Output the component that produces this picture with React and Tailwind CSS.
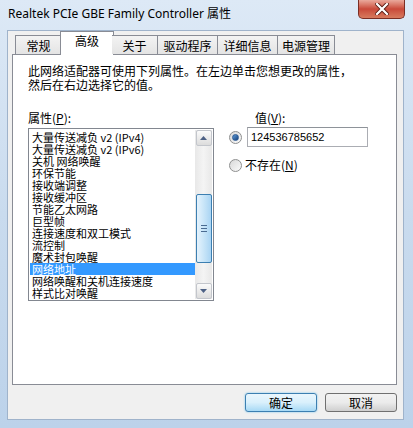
import React from 'react';

const cjk = { fontFamily: '"Noto Sans CJK SC", "Noto Sans", sans-serif' };

const tabs = ['常规', '高级', '关于', '驱动程序', '详细信息', '电源管理'];
const tabWidths = [47, 50, 46, 60, 60, 57];

const items = [
    '大量传送减负 v2 (IPv4)',
    '大量传送减负 v2 (IPv6)',
    '关机 网络唤醒',
    '环保节能',
    '接收端调整',
    '接收缓冲区',
    '节能乙太网路',
    '巨型帧',
    '连接速度和双工模式',
    '流控制',
    '魔术封包唤醒',
    '网络地址',
    '网络唤醒和关机连接速度',
    '样式比对唤醒',
];

const Radio = ({ checked }) => (
    <div className="w-[13px] h-[13px] rounded-full border border-[#8e8f8f] bg-gradient-to-br from-[#d8d8d8] to-[#fbfbfb] flex items-center justify-center shrink-0">
        {checked && (
            <div className="w-[7px] h-[7px] rounded-full bg-gradient-to-br from-[#5f9cd8] to-[#17407a] border border-[#2b5a95]" />
        )}
    </div>
);

const ScrollBtn = ({ up }) => (
    <div className="h-[16px] w-[16px] border border-[#c3c6cc] rounded-[2px] bg-gradient-to-b from-[#fbfbfb] to-[#dcdcdc] flex items-center justify-center">
        <svg width="7" height="4" viewBox="0 0 7 4">
            {up ? <path d="M0 4 L3.5 0 L7 4 Z" fill="#4d6185" /> : <path d="M0 0 L3.5 4 L7 0 Z" fill="#4d6185" />}
        </svg>
    </div>
);

export default function App() {
    return (
        <div className="w-[413px] h-[428px] bg-gradient-to-b from-[#dde9f6] via-[#c9dbee] to-[#bcd2ea] flex flex-col overflow-hidden">
            {/* Title bar */}
            <div className="h-[30px] flex items-start relative shrink-0">
                <div className="pl-[8px] pt-[5px] text-[12px] text-black" style={{ fontFamily: '"Noto Sans", "Noto Sans CJK SC", sans-serif' }}>
                    Realtek PCIe GBE Family Controller 属性
                </div>
                <div className="absolute left-[358px] top-0 w-[47px] h-[19px] rounded-b-[5px] border border-t-0 border-[#7b2e24] bg-gradient-to-b from-[#e9a99c] via-[#c9493a] to-[#d77a5e] flex items-center justify-center">
                    <svg width="14" height="12" viewBox="0 0 14 12">
                        <path d="M2 1 L12 11 M12 1 L2 11" stroke="#5a1c14" strokeWidth="4" strokeLinecap="square" />
                        <path d="M2 1 L12 11 M12 1 L2 11" stroke="#ffffff" strokeWidth="2.2" strokeLinecap="square" />
                    </svg>
                </div>
            </div>

            {/* Client area */}
            <div className="ml-[7px] w-[397px] h-[390px] bg-[#f0f0f0] border border-[#9fb3cb] flex flex-col" style={cjk}>
                {/* Tabs */}
                <div className="h-[23px] flex items-end pl-[7px] relative z-10">
                    {tabs.map((t, i) => (
                        i === 1 ? (
                            <div key={t} style={{ width: tabWidths[i] + 4 }} className="h-[24px] -mx-[2px] -mb-[1px] bg-white border border-b-0 border-[#898c95] text-[12px] leading-[18px] text-center text-black">
                                {t}
                            </div>
                        ) : (
                            <div key={t} style={{ width: tabWidths[i] }} className="h-[19px] bg-gradient-to-b from-[#f3f3f3] to-[#e4e4e4] border border-b-0 border-l-0 first:border-l border-[#898c95] text-[12px] leading-[19px] text-center text-black">
                                {t}
                            </div>
                        )
                    ))}
                </div>

                {/* Panel */}
                <div className="ml-[4px] w-[385px] h-[331px] bg-white border border-[#898c95] pt-[9px] pl-[15px]">
                    <div className="text-[12px] leading-[14px] text-black">
                        此网络适配器可使用下列属性。在左边单击您想更改的属性，<br />
                        然后在右边选择它的值。
                    </div>

                    <div className="flex mt-[19px]">
                        {/* Left column */}
                        <div className="w-[186px] flex flex-col">
                            <div className="text-[12px] leading-[14px] text-black">属性(<u>P</u>):</div>
                            <div className="mt-[3px] h-[173px] border border-[#828790] bg-white flex p-[1px]">
                                <div className="flex-1 flex flex-col pt-[1px]">
                                    {items.map((it, i) => (
                                        <div
                                            key={it}
                                            className={
                                                'h-[12px] text-[11px] leading-[12px] pl-[2px] whitespace-nowrap ' +
                                                (i === 11 ? 'bg-[#3399ff] text-white' : 'text-black')
                                            }
                                        >
                                            {it}
                                        </div>
                                    ))}
                                </div>
                                <div className="w-[17px] bg-gradient-to-r from-[#e8e8e8] via-[#f4f4f4] to-[#e8e8e8] flex flex-col items-center">
                                    <ScrollBtn up />
                                    <div className="flex-1 w-full relative">
                                        <div className="absolute left-[1px] right-0 top-[48px] h-[69px] rounded-[2px] border border-[#3c7fb1] bg-gradient-to-r from-[#e5f3fd] via-[#c8e5f8] to-[#a9d4f3] flex flex-col items-center justify-center gap-[2px]">
                                            <div className="w-[6px] h-[1px] bg-[#4a6b91]" />
                                            <div className="w-[6px] h-[1px] bg-[#4a6b91]" />
                                            <div className="w-[6px] h-[1px] bg-[#4a6b91]" />
                                        </div>
                                    </div>
                                    <ScrollBtn />
                                </div>
                            </div>
                        </div>

                        {/* Right column */}
                        <div className="ml-[15px] flex flex-col">
                            <div className="pl-[26px] text-[12px] leading-[14px] text-black">值(<u>V</u>):</div>
                            <div className="mt-[2px] flex items-center">
                                <Radio checked />
                                <div className="ml-[5px] w-[121px] h-[20px] border border-[#abadb3] border-t-[#8e9399] bg-white pl-[3px] text-[11px] leading-[18px] text-black" style={{ fontFamily: '"Liberation Sans", sans-serif' }}>
                                    124536785652
                                </div>
                            </div>
                            <div className="mt-[11px] flex items-center">
                                <Radio />
                                <div className="ml-[3px] text-[12px] leading-[14px] text-black">不存在(<u>N</u>)</div>
                            </div>
                        </div>
                    </div>
                </div>

                {/* Buttons */}
                <div className="ml-[4px] w-[385px] flex justify-end gap-[8px] mt-[8px]">
                    <div className="w-[72px] h-[19px] rounded-[3px] border border-[#3c7fb1] bg-gradient-to-b from-[#eaf6fd] via-[#d9f0fc] to-[#a7d9f5] shadow-[0_0_2px_#6cc2ee] text-[12px] leading-[17px] text-center text-black">
                        确定
                    </div>
                    <div className="w-[72px] h-[19px] rounded-[3px] border border-[#707070] bg-gradient-to-b from-[#f2f2f2] via-[#ebebeb] to-[#cfcfcf] text-[12px] leading-[17px] text-center text-black">
                        取消
                    </div>
                </div>
            </div>
        </div>
    );
}
